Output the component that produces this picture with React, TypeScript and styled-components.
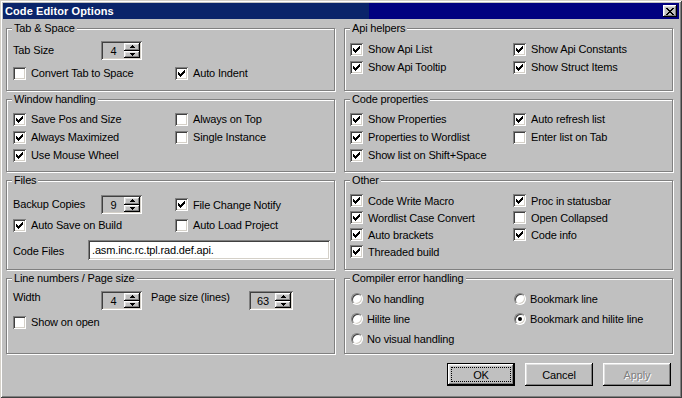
import { createGlobalStyle, styled } from "styled-components";

const GlobalStyle = createGlobalStyle`
  html, body {
    margin: 0;
    padding: 0;
    background: #c0c0c0;
    overflow: hidden;
  }
  body {
    font-family: "Liberation Sans", Arial, sans-serif;
    font-size: 11px;
    letter-spacing: -0.15px;
    color: #000;
  }
  * {
    box-sizing: border-box;
  }
`;

const raised = `
  box-shadow: inset -1px -1px #000000, inset 1px 1px #ffffff,
    inset -2px -2px #808080, inset 2px 2px #dfdfdf;
`;

const sunken = `
  box-shadow: inset 1px 1px #808080, inset -1px -1px #ffffff,
    inset 2px 2px #404040, inset -2px -2px #d4d0c8;
`;

const Window = styled.div`
  width: 682px;
  height: 398px;
  padding: 3px;
  background: #c0c0c0;
  box-shadow: inset 1px 1px #d4d0c8, inset -1px -1px #404040,
    inset 2px 2px #ffffff, inset -2px -2px #808080;
  display: flex;
  flex-direction: column;
`;

const TitleBar = styled.div`
  height: 16px;
  display: flex;
  align-items: center;
  justify-content: space-between;
  padding: 0 2px 0 2px;
  background: linear-gradient(to right, #0a246a 0, #0a246a 366px, #000080 366px);
`;

const Title = styled.span`
  color: #fff;
  font-weight: bold;
  font-size: 11px;
  letter-spacing: 0.1px;
`;

const CloseButton = styled.button`
  width: 14px;
  height: 12px;
  padding: 0;
  border: 0;
  background: #c0c0c0;
  ${raised}
  display: grid;
  place-items: center;
`;

const Columns = styled.div`
  display: grid;
  grid-template-columns: 329px 329px;
  column-gap: 9px;
  padding: 9px 0 0 3px;
`;

const Column = styled.div`
  display: flex;
  flex-direction: column;
  gap: 8px;
`;

const Group = styled.div<{ $h: number; $top: number; $left: number }>`
  position: relative;
  height: ${(p) => p.$h}px;
  border: 1px solid #808080;
  box-shadow: inset 1px 1px #ffffff, 1px 1px #ffffff;
  padding: ${(p) => p.$top}px 4px 0 ${(p) => p.$left}px;
`;

const Legend = styled.span`
  position: absolute;
  top: -8px;
  left: 5px;
  padding: 0 2px;
  background: #c0c0c0;
  line-height: 14px;
  white-space: nowrap;
`;

const Grid = styled.div<{ $cols: string; $rows: string }>`
  display: grid;
  grid-template-columns: ${(p) => p.$cols};
  grid-template-rows: ${(p) => p.$rows};
  align-items: center;
`;

const Label = styled.span<{ $top?: boolean }>`
  white-space: nowrap;
  line-height: 13px;
  align-self: ${(p) => (p.$top ? "start" : "center")};
`;

const CheckRow = styled.label<{ $span?: number }>`
  display: flex;
  align-items: center;
  gap: 5px;
  white-space: nowrap;
  grid-column: span ${(p) => p.$span ?? 1};
`;

const CheckBox = styled.span`
  flex: none;
  width: 13px;
  height: 13px;
  background: #fff;
  ${sunken}
  display: grid;
  place-items: center;
`;

const RadioRow = styled.label`
  display: flex;
  align-items: center;
  gap: 4px;
  white-space: nowrap;
`;

const RadioCircle = styled.span<{ $on: boolean }>`
  flex: none;
  position: relative;
  width: 12px;
  height: 12px;
  margin-left: 1px;
  border-radius: 50%;
  background: #fff;
  border: 1px solid;
  border-color: #808080 #ffffff #ffffff #808080;
  box-shadow: inset 1px 1px #404040, inset -1px -1px #d4d0c8;

  &::after {
    content: "";
    display: ${(p) => (p.$on ? "block" : "none")};
    position: absolute;
    left: 3px;
    top: 3px;
    width: 4px;
    height: 4px;
    border-radius: 50%;
    background: #000;
  }
`;

const Spin = styled.div<{ $w: number }>`
  width: ${(p) => p.$w}px;
  height: 19px;
  padding: 2px;
  display: flex;
  background: #c0c0c0;
  ${sunken}
`;

const SpinValue = styled.span`
  flex: 1;
  display: flex;
  align-items: center;
  justify-content: center;
  padding-top: 1px;
`;

const SpinButtons = styled.div`
  width: 16px;
  display: flex;
  flex-direction: column;
`;

const SpinButton = styled.span`
  flex: 1;
  background: #c0c0c0;
  ${raised}
  display: grid;
  place-items: center;
`;

const CodeFilesRow = styled.div`
  grid-column: 1 / -1;
  display: flex;
  align-items: center;
`;

const CodeFilesLabel = styled.span`
  width: 75px;
  padding-top: 2px;
`;

const TextBox = styled.div`
  width: 242px;
  height: 20px;
  padding: 0 4px;
  display: flex;
  align-items: center;
  background: #fff;
  ${sunken}
`;

const Footer = styled.div`
  display: flex;
  justify-content: flex-end;
  gap: 10px;
  padding: 9px 8px 0 0;
`;

const DialogButton = styled.button<{ $default?: boolean; $off?: boolean }>`
  position: relative;
  width: 68px;
  height: 23px;
  padding: 0;
  font-family: inherit;
  font-size: 11px;
  letter-spacing: inherit;
  background: #c0c0c0;
  color: ${(p) => (p.$off ? "#808080" : "#000")};
  text-shadow: ${(p) => (p.$off ? "1px 1px #ffffff" : "none")};
  border: ${(p) => (p.$default ? "1px solid #000" : "0")};
  ${raised}

  &::after {
    content: "";
    display: ${(p) => (p.$default ? "block" : "none")};
    position: absolute;
    inset: 3px;
    border: 1px dotted #000;
  }
`;

function CheckMark() {
  const tops = [2, 3, 4, 3, 2, 1, 0];
  return (
    <svg width="7" height="7" viewBox="0 0 7 7" shapeRendering="crispEdges">
      {tops.map((t, i) => (
        <rect key={i} x={i} y={t} width="1" height="3" fill="#000" />
      ))}
    </svg>
  );
}

function Check({ label, on, span }: { label: string; on?: boolean; span?: number }) {
  return (
    <CheckRow $span={span}>
      <CheckBox>{on && <CheckMark />}</CheckBox>
      {label}
    </CheckRow>
  );
}

function Radio({ label, on }: { label: string; on?: boolean }) {
  return (
    <RadioRow>
      <RadioCircle $on={!!on} />
      {label}
    </RadioRow>
  );
}

function Arrow({ up }: { up?: boolean }) {
  return (
    <svg width="5" height="3" viewBox="0 0 5 3" shapeRendering="crispEdges">
      <path d={up ? "M2 0h1v1h1v1h1v1H0V2h1V1h1z" : "M0 0h5v1H4v1H3v1H2V2H1V1H0z"} fill="#000" />
    </svg>
  );
}

function Spinner({ value, w = 41 }: { value: string; w?: number }) {
  return (
    <Spin $w={w}>
      <SpinValue>{value}</SpinValue>
      <SpinButtons>
        <SpinButton>
          <Arrow up />
        </SpinButton>
        <SpinButton>
          <Arrow />
        </SpinButton>
      </SpinButtons>
    </Spin>
  );
}

function CloseGlyph() {
  const rows = [
    [0, 2, 6, 2],
    [1, 2, 5, 2],
    [2, 4],
    [3, 2],
    [2, 4],
    [1, 2, 5, 2],
    [0, 2, 6, 2],
  ];
  return (
    <svg width="8" height="7" viewBox="0 0 8 7" shapeRendering="crispEdges">
      {rows.map((r, y) => (
        <g key={y}>
          <rect x={r[0]} y={y} width={r[1]} height="1" fill="#000" />
          {r.length > 2 && <rect x={r[2]} y={y} width={r[3]} height="1" fill="#000" />}
        </g>
      ))}
    </svg>
  );
}

export default function App() {
  return (
    <>
      <GlobalStyle />
      <Window>
        <TitleBar>
          <Title>Code Editor Options</Title>
          <CloseButton>
            <CloseGlyph />
          </CloseButton>
        </TitleBar>

        <Columns>
          <Column>
            <Group $h={63} $top={12} $left={6}>
              <Legend>Tab &amp; Space</Legend>
              <Grid $cols="88px 74px 1fr" $rows="19px 26px">
                <Label>Tab Size</Label>
                <Spinner value="4" />
                <span />
                <Check label="Convert Tab to Space" span={2} />
                <Check label="Auto Indent" on />
              </Grid>
            </Group>

            <Group $h={73} $top={10} $left={6}>
              <Legend>Window handling</Legend>
              <Grid $cols="162px 1fr" $rows="18px 18px 18px">
                <Check label="Save Pos and Size" on />
                <Check label="Always on Top" />
                <Check label="Always Maximized" on />
                <Check label="Single Instance" />
                <Check label="Use Mouse Wheel" on />
              </Grid>
            </Group>

            <Group $h={90} $top={14} $left={6}>
              <Legend>Files</Legend>
              <Grid $cols="88px 74px 1fr" $rows="19px 22px 28px">
                <Label>Backup Copies</Label>
                <Spinner value="9" />
                <Check label="File Change Notify" on />
                <Check label="Auto Save on Build" on span={2} />
                <Check label="Auto Load Project" />
                <CodeFilesRow>
                  <CodeFilesLabel>Code Files</CodeFilesLabel>
                  <TextBox>.asm.inc.rc.tpl.rad.def.api.</TextBox>
                </CodeFilesRow>
              </Grid>
            </Group>

            <Group $h={76} $top={12} $left={6}>
              <Legend>Line numbers / Page size</Legend>
              <Grid $cols="88px 50px 98px 1fr" $rows="19px 24px">
                <Label $top>Width</Label>
                <Spinner value="4" />
                <Label $top>Page size (lines)</Label>
                <Spinner value="63" w={44} />
                <Check label="Show on open" span={4} />
              </Grid>
            </Group>
          </Column>

          <Column>
            <Group $h={63} $top={11} $left={5}>
              <Legend>Api helpers</Legend>
              <Grid $cols="163px 1fr" $rows="18px 18px">
                <Check label="Show Api List" on />
                <Check label="Show Api Constants" on />
                <Check label="Show Api Tooltip" on />
                <Check label="Show Struct Items" on />
              </Grid>
            </Group>

            <Group $h={73} $top={10} $left={5}>
              <Legend>Code properties</Legend>
              <Grid $cols="163px 1fr" $rows="18px 18px 18px">
                <Check label="Show Properties" on />
                <Check label="Auto refresh list" on />
                <Check label="Properties to Wordlist" on />
                <Check label="Enter list on Tab" />
                <Check label="Show list on Shift+Space" on />
              </Grid>
            </Group>

            <Group $h={90} $top={11} $left={5}>
              <Legend>Other</Legend>
              <Grid $cols="163px 1fr" $rows="17px 17px 17px 17px">
                <Check label="Code Write Macro" on />
                <Check label="Proc in statusbar" on />
                <Check label="Wordlist Case Convert" on />
                <Check label="Open Collapsed" />
                <Check label="Auto brackets" on />
                <Check label="Code info" on />
                <Check label="Threaded build" on />
              </Grid>
            </Group>

            <Group $h={76} $top={10} $left={5}>
              <Legend>Compiler error handling</Legend>
              <Grid $cols="163px 1fr" $rows="20px 20px 20px">
                <Radio label="No handling" />
                <Radio label="Bookmark line" />
                <Radio label="Hilite line" />
                <Radio label="Bookmark and hilite line" on />
                <Radio label="No visual handling" />
              </Grid>
            </Group>
          </Column>
        </Columns>

        <Footer>
          <DialogButton $default>OK</DialogButton>
          <DialogButton>Cancel</DialogButton>
          <DialogButton $off>Apply</DialogButton>
        </Footer>
      </Window>
    </>
  );
}
